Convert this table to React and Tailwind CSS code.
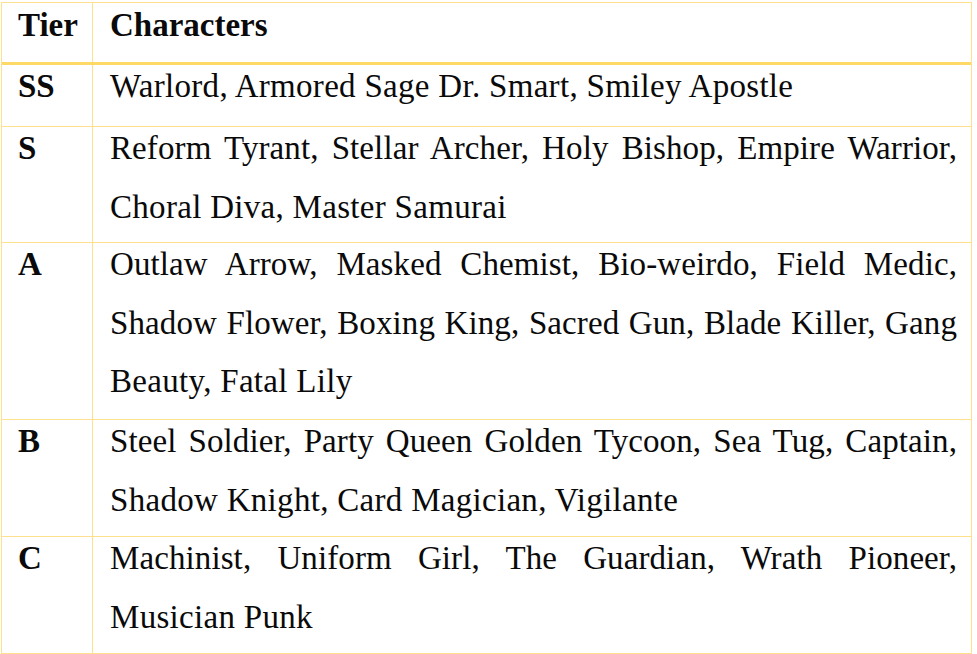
import React from "react";

const rows = [
  { tier: "SS", h: "h-[61px]", lines: ["Warlord, Armored Sage Dr. Smart, Smiley Apostle"] },
  {
    tier: "S",
    h: "h-[115px]",
    lines: ["Reform Tyrant, Stellar Archer, Holy Bishop, Empire Warrior,", "Choral Diva, Master Samurai"],
  },
  {
    tier: "A",
    h: "h-[176px]",
    lines: [
      "Outlaw Arrow, Masked Chemist, Bio-weirdo, Field Medic,",
      "Shadow Flower, Boxing King, Sacred Gun, Blade Killer, Gang",
      "Beauty, Fatal Lily",
    ],
  },
  {
    tier: "B",
    h: "h-[116px]",
    lines: ["Steel Soldier, Party Queen Golden Tycoon, Sea Tug, Captain,", "Shadow Knight, Card Magician, Vigilante"],
  },
  {
    tier: "C",
    h: "h-[116px]",
    lines: ["Machinist, Uniform Girl, The Guardian, Wrath Pioneer,", "Musician Punk"],
  },
];

// each visual line is its own block so the wraps match the reference
const Lines = ({ lines }) => (
  <div className="-mt-[8px]">
    {lines.map((l, i) =>
      i < lines.length - 1 ? (
        <div key={i} className="text-justify [text-align-last:justify] tracking-[0.1px]">
          {l}
        </div>
      ) : (
        <div key={i} className="whitespace-nowrap text-left tracking-[0.3px]">
          {l}
        </div>
      )
    )}
  </div>
);

export default function App() {
  return (
    <div className="min-h-[654px] bg-white pt-[2px] pl-[1px]">
      <div className="w-[971px] border-[1.5px] border-[#FFE08C] font-['Liberation_Serif','Times_New_Roman',serif] text-[33px] leading-[58.5px] text-[#0a0a0a]">
        {/* header */}
        <div className="flex h-[62px] border-b-[3px] border-[#FFD966] font-bold">
          <div className="w-[91px] shrink-0 border-r border-[#FFE08C] pl-[16px]">
            <div className="-mt-[7px]">Tier</div>
          </div>
          <div className="flex-1 pl-[17px] pr-[14px]">
            <div className="-mt-[7px]">Characters</div>
          </div>
        </div>
        {rows.map((r, i) => (
          <div
            key={r.tier}
            className={`flex ${r.h} ${i < rows.length - 1 ? "border-b border-[#FFE08C]" : ""} box-content`}
          >
            <div className="w-[91px] shrink-0 border-r border-[#FFE08C] pl-[16px] font-bold">
              <div className="-mt-[8px]">{r.tier}</div>
            </div>
            <div className="min-w-0 flex-1 pl-[17px] pr-[14px]">
              <Lines lines={r.lines} />
            </div>
          </div>
        ))}
      </div>
    </div>
  );
}
